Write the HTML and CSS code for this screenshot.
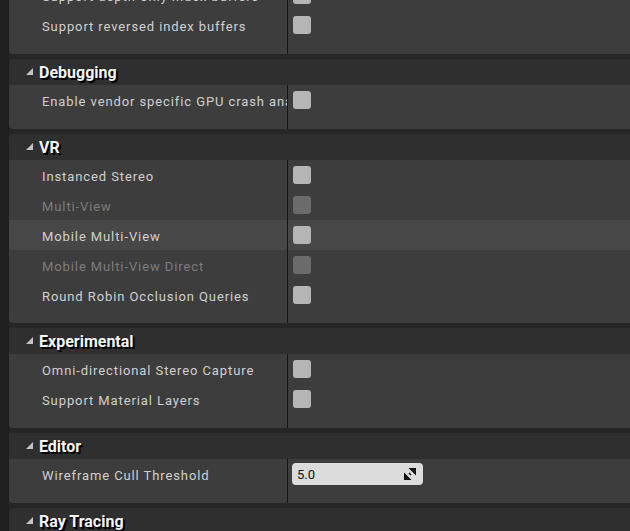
FILE: index.html
```html
<!DOCTYPE html>
<html>
<head>
<meta charset="utf-8">
<link rel="stylesheet" href="styles.css">
</head>
<body>
<div class="page">
  <section class="panel">
    <div class="body">
      <div class="row"><div class="name">Support depth-only index buffers</div><div class="value"><span class="cb"></span></div></div>
      <div class="row"><div class="name">Support reversed index buffers</div><div class="value"><span class="cb"></span></div></div>
      <div class="row end"><div class="name"></div><div class="value"></div></div>
    </div>
  </section>

  <section class="panel">
    <div class="head"><span class="tri"></span><span class="title">Debugging</span></div>
    <div class="body">
      <div class="row"><div class="name">Enable vendor specific GPU crash analysis</div><div class="value"><span class="cb"></span></div></div>
      <div class="row end"><div class="name"></div><div class="value"></div></div>
    </div>
  </section>

  <section class="panel">
    <div class="head"><span class="tri"></span><span class="title">VR</span></div>
    <div class="body">
      <div class="row"><div class="name">Instanced Stereo</div><div class="value"><span class="cb"></span></div></div>
      <div class="row disabled"><div class="name">Multi-View</div><div class="value"><span class="cb"></span></div></div>
      <div class="row hover"><div class="name">Mobile Multi-View</div><div class="value"><span class="cb"></span></div></div>
      <div class="row disabled"><div class="name">Mobile Multi-View Direct</div><div class="value"><span class="cb"></span></div></div>
      <div class="row"><div class="name">Round Robin Occlusion Queries</div><div class="value"><span class="cb"></span></div></div>
      <div class="row end short"><div class="name"></div><div class="value"></div></div>
    </div>
  </section>

  <section class="panel">
    <div class="head"><span class="tri"></span><span class="title">Experimental</span></div>
    <div class="body">
      <div class="row"><div class="name">Omni-directional Stereo Capture</div><div class="value"><span class="cb"></span></div></div>
      <div class="row"><div class="name">Support Material Layers</div><div class="value"><span class="cb"></span></div></div>
      <div class="row end"><div class="name"></div><div class="value"></div></div>
    </div>
  </section>

  <section class="panel">
    <div class="head"><span class="tri"></span><span class="title">Editor</span></div>
    <div class="body">
      <div class="row"><div class="name">Wireframe Cull Threshold</div><div class="value">
        <div class="num"><span class="numtext">5.0</span>
          <svg class="drag" width="12" height="12" viewBox="0 0 12 12"><polygon points="4.5,0 12,0 12,7.5" fill="#111"/><polygon points="0,4.5 0,12 7.5,12" fill="#111"/><polygon points="5.5,4.5 7.5,6.5 6.5,7.5 4.5,5.5" fill="#111"/></svg>
        </div>
      </div></div>
      <div class="row end"><div class="name"></div><div class="value"></div></div>
    </div>
  </section>

  <section class="panel">
    <div class="head"><span class="tri"></span><span class="title">Ray Tracing</span></div>
  </section>
</div>
</body>
</html>
```
FILE: styles.css
```css
html, body {
  margin: 0;
  padding: 0;
  background: #1f1f1f;
  overflow: hidden;
  height: 100%;
}
.page {
  margin-top: -20px;
  margin-left: 9px;
  background: #262626;
  display: flex;
  flex-direction: column;
  gap: 5px;
  font-family: Roboto, "Noto Sans", sans-serif;
}
.panel {
  background: #3d3d3d;
  border-radius: 4px 0 0 4px;
  overflow: hidden;
}
.head {
  height: 26px;
  background: #2f2f2f;
  display: flex;
  align-items: center;
  padding-left: 17px;
}
.tri {
  width: 7px;
  height: 7px;
  background: #c4c4c4;
  clip-path: polygon(100% 0, 100% 100%, 0 100%);
  margin-right: 6px;
  margin-top: -1px;
}
.title {
  color: #f4f4f4;
  font-weight: bold;
  font-size: 16px;
  text-shadow: 1px 1px 1px #000, 2px 2px 0 #000;
}
.body {
  display: grid;
  grid-template-columns: 278px 1fr;
}
.row {
  display: contents;
}
.name {
  height: 30px;
  box-sizing: border-box;
  padding-top: 2px;
  display: flex;
  align-items: center;
  padding-left: 33px;
  color: #d0d0d0;
  font-size: 13px;
  letter-spacing: 0.9px;
  white-space: nowrap;
  overflow: hidden;
}
.value {
  height: 30px;
  border-left: 1px solid #151515;
  display: flex;
  align-items: center;
  padding-left: 5px;
}
.row.end .name, .row.end .value {
  height: 14px;
  padding-top: 0;
}
.row.end.short .name, .row.end.short .value {
  height: 13px;
}
.row.hover .name, .row.hover .value {
  background: #474747;
}
.row.disabled .name {
  color: #7c7c7c;
}
.cb {
  width: 18px;
  height: 18px;
  border-radius: 3px;
  background: #b5b5b5;
}
.row.disabled .cb {
  background: #6b6b6b;
}
.num {
  width: 131px;
  height: 22px;
  box-sizing: border-box;
  background: #dcdcdc;
  border-radius: 4px;
  display: flex;
  align-items: center;
  justify-content: space-between;
  padding: 0 7px 0 5px;
  margin-left: -1px;
}
.numtext {
  color: #111;
  font-size: 13px;
}
.drag {
  display: block;
}
```
